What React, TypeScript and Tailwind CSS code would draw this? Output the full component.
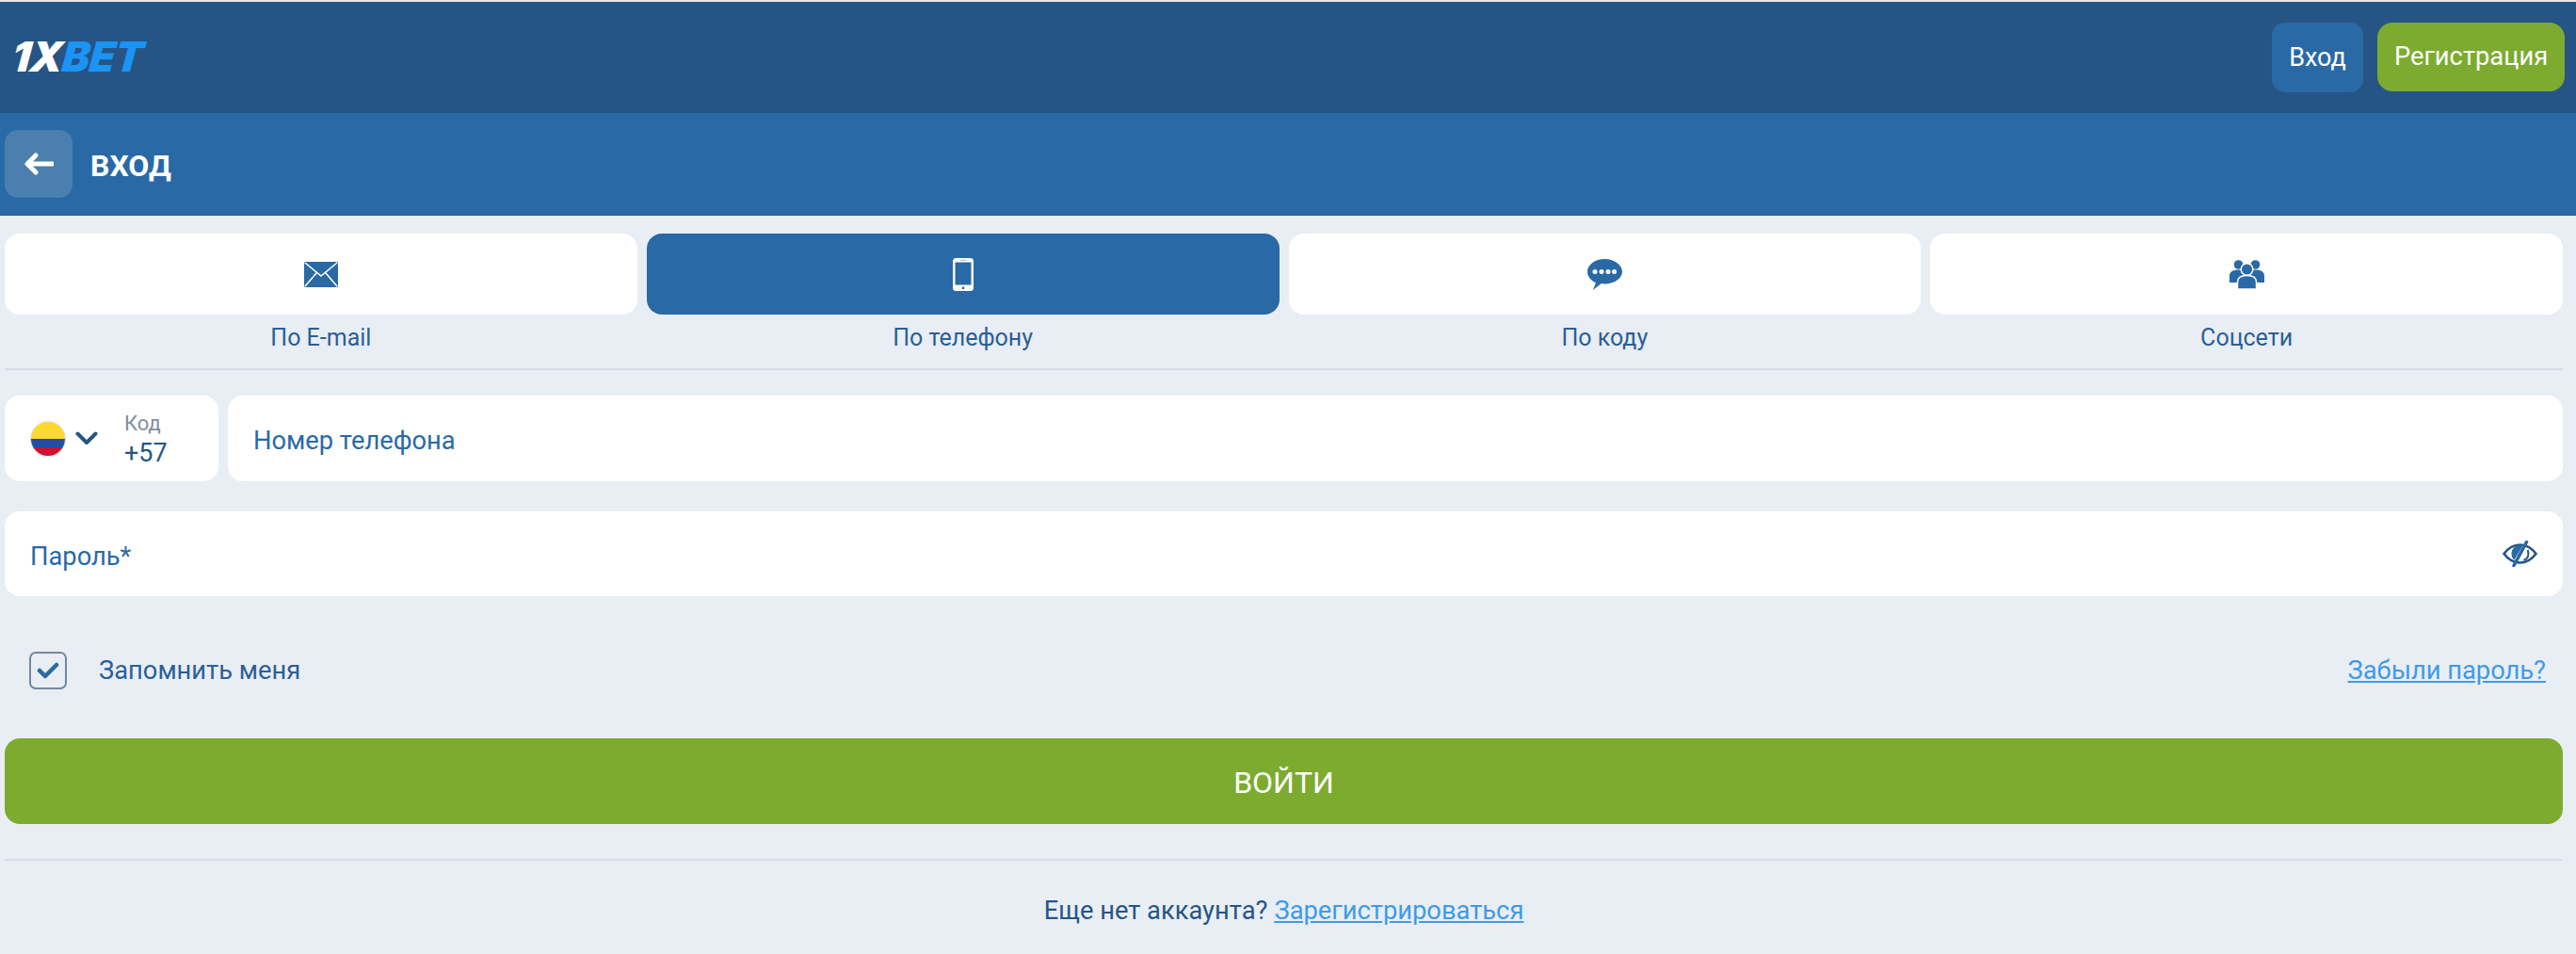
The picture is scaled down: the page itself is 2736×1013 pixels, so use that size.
const tabs = [
  { label: "По E-mail", icon: "mail" },
  { label: "По телефону", icon: "phone" },
  { label: "По коду", icon: "chat" },
  { label: "Соцсети", icon: "users" },
];

const MailIcon = () => (
  <svg width="36" height="27" viewBox="0 0 36 27">
    <rect width="36" height="27" rx="1.5" fill="#2969a5" />
    <path d="M1 1l17 14L35 1M1 26l12-14M35 26L23 12" fill="none" stroke="#fff" strokeWidth="1.6" />
  </svg>
);

const PhoneIcon = () => (
  <svg width="22" height="35" viewBox="0 0 22 35">
    <rect width="22" height="35" rx="3.500" fill="#fff" />
    <rect x="2.500" y="4.500" width="17" height="24" fill="#2969a5" />
    <rect x="8" y="1.800" width="6" height="1" fill="#9db9d4" />
    <rect x="9.800" y="30.500" width="2.400" height="2.500" fill="#2969a5" />
  </svg>
);

const ChatIcon = () => (
  <svg width="37" height="33" viewBox="0 0 37 33">
    <path d="M18.500 0C8.300 0 0 6 0 13.500c0 5 3.600 9.300 8.800 11.600-.4 2.700-3 7.900-3 7.900l9-6.900c1.200.2 2.400.3 3.700.3C28.700 26.400 37 20.500 37 13.500S28.700 0 18.500 0z" fill="#2969a5" />
    <circle cx="8" cy="13.500" r="2.500" fill="#fff" />
    <circle cx="15" cy="13.500" r="2.500" fill="#fff" />
    <circle cx="22" cy="13.500" r="2.500" fill="#fff" />
    <circle cx="28.500" cy="13.500" r="2.500" fill="#fff" />
  </svg>
);

const UsersIcon = () => (
  <svg width="37" height="31" viewBox="0 0 37 31">
    <circle cx="9.500" cy="5" r="4.800" fill="#2969a5" />
    <circle cx="27.500" cy="5" r="4.800" fill="#2969a5" />
    <path d="M0 24v-7c0-4 3-6.500 9.500-6.500S19 13 19 17v7zM18 24v-7c0-4 3-6.500 9.500-6.500S37 13 37 17v7z" fill="#2969a5" />
    <circle cx="18.500" cy="10" r="6.300" fill="#2969a5" stroke="#fff" strokeWidth="1.500" />
    <path d="M8.500 31v-7.500c0-4.500 3.500-7 10-7s10 2.500 10 7V31z" fill="#2969a5" stroke="#fff" strokeWidth="1.500" />
  </svg>
);

const TabIcon = ({ name }: { name: string }) => {
  if (name === "mail") return <MailIcon />;
  if (name === "phone") return <PhoneIcon />;
  if (name === "chat") return <ChatIcon />;
  return <UsersIcon />;
};

const EyeOff = () => (
  <svg width="37" height="28" viewBox="0 0 37 28">
    <path d="M1.500 14C6 8 11 4.500 18.500 4.500S31 8 35.500 14C31 20 26 23.500 18.500 23.500S6 20 1.500 14z" fill="none" stroke="#265585" strokeWidth="2.600" />
    <path d="M18.500 5C13 5 9.500 9 9.500 14c0 2.700 1 5 2.800 6.700L21.500 5.300c-1-.2-2-.3-3-.3z" fill="#2969a5" />
    <path d="M25.500 1.500L12 26.500" stroke="#2969a5" strokeWidth="3.600" strokeLinecap="round" />
    <path d="M26.500 10c.6 1.200.9 2.600.9 4 0 3.200-2 5.800-5 7" fill="none" stroke="#265585" strokeWidth="2" />
  </svg>
);

const Flag = () => (
  <span className="flex h-[38px] w-[38px] flex-col overflow-hidden rounded-full border border-[#e3e3e3]">
    <span className="h-[19px] bg-[#fcd92f]" />
    <span className="h-[10px] bg-[#1d4fa8]" />
    <span className="h-[9px] bg-[#d0102c]" />
  </span>
);

export default function App() {
  return (
    <div className="h-[1013px] w-[2736px] overflow-hidden bg-[#e9eef4] font-['Roboto',sans-serif] text-[#265585]">
      <div className="h-[2px] bg-[#e6e6e6]" />
      <header className="flex h-[118px] items-center justify-between bg-[#265585] pr-[12px] pl-[13px]">
        <div className="mb-[2px] -skew-x-6 font-['Inter',sans-serif] text-[44px] leading-none font-black tracking-[-0.5px] italic">
          <span className="text-white">1X</span>
          <span className="text-[#1a94f5]">BET</span>
        </div>
        <div className="flex gap-[15px] text-[27px] text-white">
          <button className="h-[74px] w-[97px] rounded-[14px] bg-[#2969a5]">Вход</button>
          <button className="h-[73px] w-[199px] rounded-[16px] bg-[#7cab2f] text-[27.300px]">Регистрация</button>
        </div>
      </header>

      <div className="flex h-[109px] items-center gap-[19px] border-b border-[#1f5c96] bg-[#2969a5] pl-[5px]">
        <button className="flex h-[72px] w-[72px] items-center justify-center rounded-[14px] bg-[#4a7fae]">
          <svg width="32" height="24" viewBox="0 0 32 24">
            <path d="M13 3L4 12l9 9M5 12h26" fill="none" stroke="#fff" strokeWidth="5" strokeLinecap="round" strokeLinejoin="round" />
          </svg>
        </button>
        <span className="pt-[4px] text-[32px] font-bold text-white">ВХОД</span>
      </div>

      <div className="pr-[14px] pl-[5px]">
        <div className="grid grid-cols-4 gap-[10px] pt-[19px]">
          {tabs.map((tab) => (
            <div key={tab.label} className="flex flex-col items-center">
              <div
                className={
                  tab.icon === "phone"
                    ? "flex h-[86px] w-full items-center justify-center rounded-[16px] bg-[#2969a5]"
                    : "flex h-[86px] w-full items-center justify-center rounded-[16px] bg-white"
                }
              >
                <TabIcon name={tab.icon} />
              </div>
              <span className="mt-[11px] text-[25px] leading-[28px] text-[#2a5f97]">{tab.label}</span>
            </div>
          ))}
        </div>
        <div className="mt-[18px] h-[2px] bg-[#d5dbe2]" />

        <div className="mt-[27px] flex gap-[10px]">
          <div className="flex h-[91px] w-[227px] items-center rounded-[16px] bg-white pl-[27px]">
            <Flag />
            <svg className="ml-[10px]" width="24" height="15" viewBox="0 0 24 15">
              <path d="M2.500 2.500L12 12l9.500-9.500" fill="none" stroke="#265585" strokeWidth="4" strokeLinecap="round" strokeLinejoin="round" />
            </svg>
            <div className="ml-[28px] flex flex-col">
              <span className="text-[22px] leading-[30px] text-[#7f8fa3]">Код</span>
              <span className="text-[27px] leading-[32px]">+57</span>
            </div>
          </div>
          <div className="flex h-[91px] flex-1 items-center rounded-[16px] bg-white pt-[6px] pl-[27px] text-[27.300px] text-[#2969a5]">
            Номер телефона
          </div>
        </div>

        <div className="mt-[32px] flex h-[90px] items-center justify-between rounded-[16px] bg-white pr-[27px] pl-[27px] text-[27.300px] text-[#2969a5]">
          <span className="pt-[6px]">Пароль*</span>
          <EyeOff />
        </div>

        <div className="mt-[59px] flex h-[40px] items-center justify-between pr-[18px] pl-[26px] text-[27.300px]">
          <div className="flex items-center gap-[34px]">
            <span className="flex h-[40px] w-[40px] items-center justify-center rounded-[7px] border-2 border-[#7389a0]">
              <svg width="24" height="18" viewBox="0 0 24 18">
                <path d="M3 9l6 6L21 3" fill="none" stroke="#2969a5" strokeWidth="4.500" strokeLinecap="round" strokeLinejoin="round" />
              </svg>
            </span>
            <span className="text-[#2a5f97]">Запомнить меня</span>
          </div>
          <a className="text-[#3d9be9] underline">Забыли пароль?</a>
        </div>

        <button className="mt-[52px] h-[91px] w-full rounded-[16px] bg-[#7cab2f] pt-[2px] text-[32px] text-white">
          ВОЙТИ
        </button>

        <div className="mt-[37px] h-[2px] bg-[#d9dfe6]" />
        <div className="mt-[33px] flex justify-center gap-[7px] text-[27.300px]">
          <span>Еще нет аккаунта?</span>
          <a className="text-[#3d9be9] underline">Зарегистрироваться</a>
        </div>
      </div>
    </div>
  );
}
